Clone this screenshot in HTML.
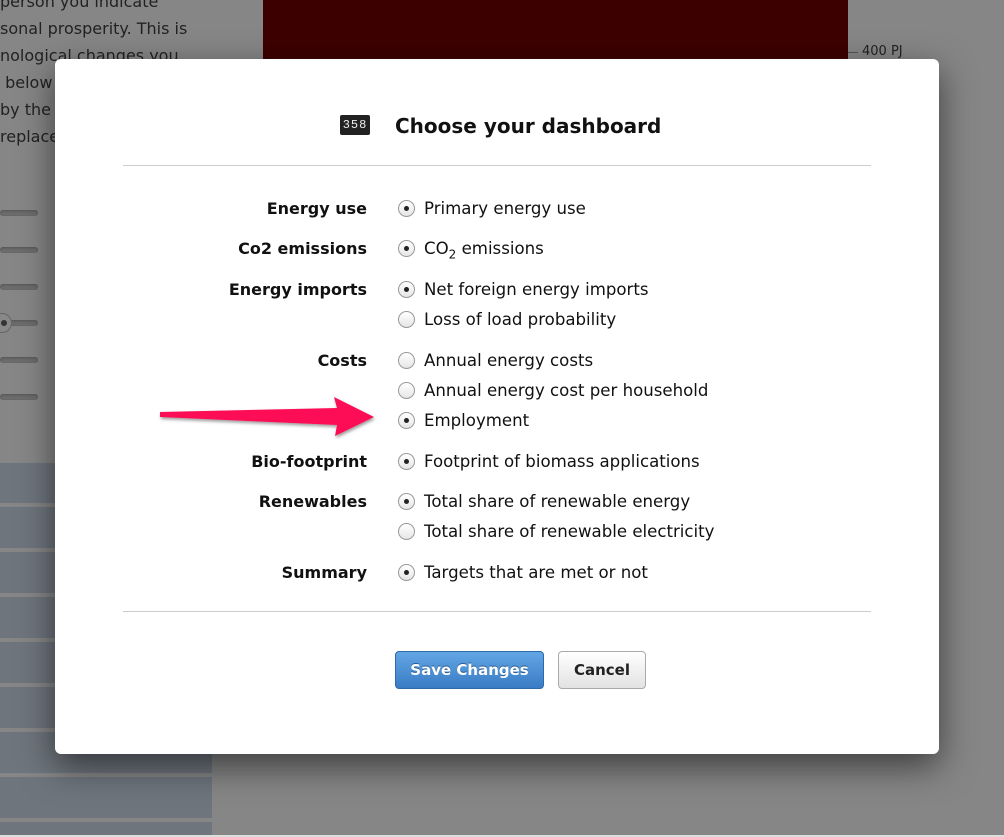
<!DOCTYPE html>
<html><head><meta charset="utf-8"><style>
*{margin:0;padding:0;box-sizing:border-box}
body{width:1004px;height:837px;background:#868686;position:relative;overflow:hidden;font-family:"DejaVu Sans","Liberation Sans",sans-serif}
.bgtext{position:absolute;left:0;top:-12px;font-size:16px;color:#222;line-height:27px;white-space:pre}
.red{position:absolute;left:263px;top:0;width:585px;height:60px;background:#3d0000}
.pl{position:absolute;left:862px;top:44px;font-size:13px;color:#222}
.tick{position:absolute;left:848px;top:52px;width:10px;height:1px;background:#555}
.slider{position:absolute;left:0;width:38px;height:6px;border-radius:3px;background:#6c6c6c;box-shadow:inset 0 1px 2px #555}
.blk{position:absolute;left:0;width:212px;background:#6e757d}
.modal{position:absolute;left:55px;top:59px;width:884px;height:695px;background:#fff;border-radius:6px;box-shadow:0 12px 35px rgba(0,0,0,.55)}
.title{position:absolute;left:340px;top:55px;font-size:20px;font-weight:bold;color:#111}
.icon{position:absolute;left:285px;top:56px;width:30px;height:20px;background:#222;border-radius:2px;color:#eee;font-size:12px;font-family:"Liberation Mono",monospace;line-height:20px;text-align:center;letter-spacing:1px}
.hr{position:absolute;left:68px;width:748px;height:1px;background:#ccc}
.lab{position:absolute;right:572px;font-size:16px;font-weight:bold;color:#111;text-align:right;white-space:nowrap}
.opt{position:absolute;left:343px;font-size:16.6px;color:#111;white-space:nowrap}
.rad{display:inline-block;width:17px;height:17px;border-radius:50%;border:1px solid #999;background:linear-gradient(#fff,#e6e6e6);vertical-align:-3px;margin-right:9px;position:relative}
.rad.on::after{content:"";position:absolute;left:5px;top:5px;width:5px;height:5px;border-radius:50%;background:#222}
.btn{position:absolute;top:592px;height:38px;border-radius:4px;font-size:15px;font-weight:bold;text-align:center;line-height:36px}
</style></head><body>
<div class="bgtext">person you indicate
sonal prosperity. This is
nological changes you
 below
by the
replace</div>
<div class="red"></div><div class="tick"></div><div class="pl">400 PJ</div>
<div class="slider" style="top:210px"></div>
<div class="slider" style="top:247px"></div>
<div class="slider" style="top:284px"></div>
<div class="slider" style="top:320px"></div>
<div class="slider" style="top:357px"></div>
<div class="slider" style="top:394px"></div>
<div style="position:absolute;left:-8px;top:313px;width:20px;height:20px;border-radius:50%;background:#888;border:1px solid #666"><div style="position:absolute;left:8px;top:6px;width:6px;height:6px;border-radius:50%;background:#333"></div></div>
<div class="blk" style="top:463px;height:40px"></div>
<div class="blk" style="top:507px;height:41px"></div>
<div class="blk" style="top:552px;height:41px"></div>
<div class="blk" style="top:597px;height:41px"></div>
<div class="blk" style="top:642px;height:41px"></div>
<div class="blk" style="top:687px;height:41px"></div>
<div class="blk" style="top:732px;height:41px"></div>
<div class="blk" style="top:777px;height:41px"></div>
<div class="blk" style="top:822px;height:13px"></div>
<div style="position:absolute;left:0;top:835px;width:1004px;height:2px;background:#ddd"></div>
<div class="modal">
<div class="icon">358</div>
<div class="title">Choose your dashboard</div>
<div class="hr" style="top:106px"></div>
<div class="lab" style="top:140px">Energy use</div><div class="opt" style="top:140px"><span class="rad on"></span>Primary energy use</div>
<div class="lab" style="top:180px">Co2 emissions</div><div class="opt" style="top:180px"><span class="rad on"></span>CO<sub style="font-size:12px">2</sub> emissions</div>
<div class="lab" style="top:221px">Energy imports</div><div class="opt" style="top:221px"><span class="rad on"></span>Net foreign energy imports</div>
<div class="opt" style="top:251px"><span class="rad"></span>Loss of load probability</div>
<div class="lab" style="top:292px">Costs</div><div class="opt" style="top:292px"><span class="rad"></span>Annual energy costs</div>
<div class="opt" style="top:322px"><span class="rad"></span>Annual energy cost per household</div>
<div class="opt" style="top:352px"><span class="rad on"></span>Employment</div>
<div class="lab" style="top:393px">Bio-footprint</div><div class="opt" style="top:393px"><span class="rad on"></span>Footprint of biomass applications</div>
<div class="lab" style="top:433px">Renewables</div><div class="opt" style="top:433px"><span class="rad on"></span>Total share of renewable energy</div>
<div class="opt" style="top:463px"><span class="rad"></span>Total share of renewable electricity</div>
<div class="lab" style="top:504px">Summary</div><div class="opt" style="top:504px"><span class="rad on"></span>Targets that are met or not</div>
<div class="hr" style="top:552px"></div>
<div class="btn" style="left:340px;width:149px;background:linear-gradient(#62a6e4,#3a7cc5);border:1px solid #2f6aa8;color:#fff;text-shadow:0 -1px 0 #2a5a90">Save Changes</div>
<div class="btn" style="left:503px;width:88px;background:linear-gradient(#fff,#e2e2e2);border:1px solid #aaa;color:#222">Cancel</div>
</div>
<svg style="position:absolute;left:0;top:0" width="1004" height="837"><defs><filter id="s"><feDropShadow dx="1" dy="2" stdDeviation="1.5" flood-opacity=".4"/></filter></defs>
<path d="M160 412 L337 408 L334 397 L374 417 L335 436 L337 425 L160 417 Z" fill="#fc0e55" filter="url(#s)"/></svg>
</body></html>
